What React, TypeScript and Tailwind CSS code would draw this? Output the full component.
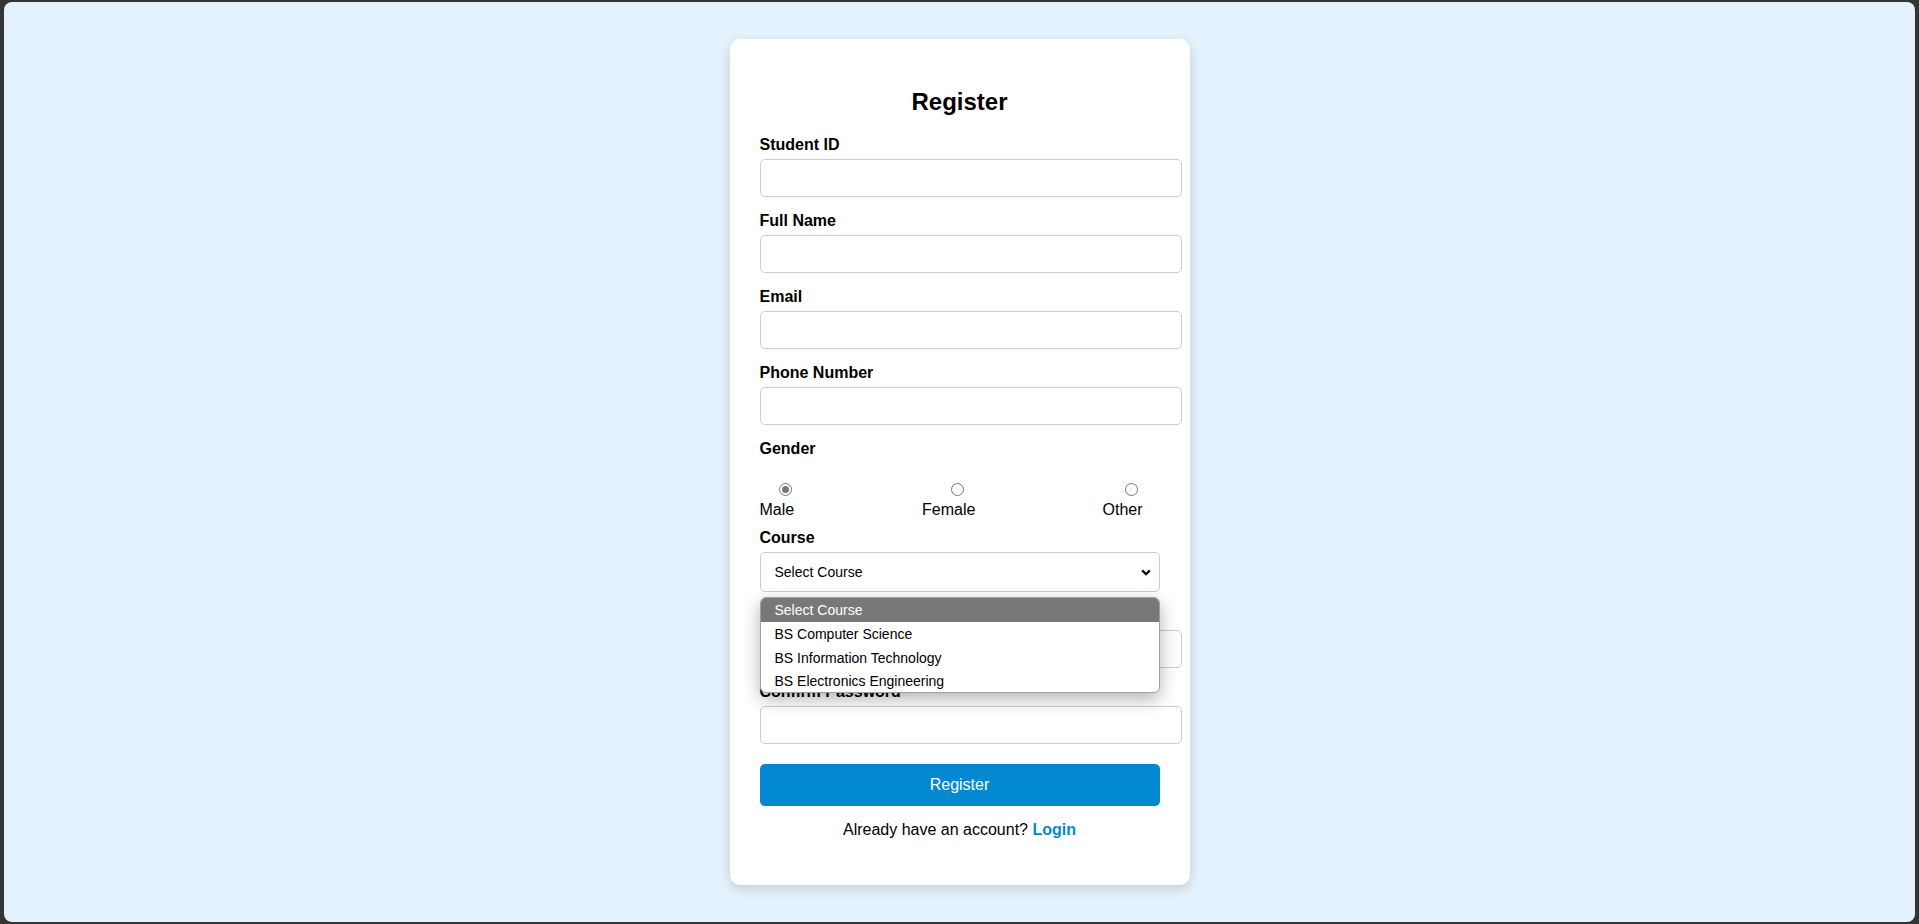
import React from "react";

const font = { fontFamily: '"Liberation Sans", Arial, sans-serif' };

function Field({ label, last }: { label: string; last?: boolean }) {
  return (
    <div className={last ? "" : "mb-[14px]"}>
      <div className="text-[16px] font-bold leading-[20px] text-black mb-[4px]">{label}</div>
      <div className="h-[38px] w-[422px] border border-[#cccccc] rounded-[5px] bg-white"></div>
    </div>
  );
}

function Radio({ label, checked, width }: { label: string; checked?: boolean; width: string }) {
  return (
    <div className={`flex flex-col ${width}`}>
      <div className="flex justify-center pt-[24px]">
        <div className="w-[13px] h-[13px] rounded-full border border-[#767676] bg-white flex items-center justify-center">
          {checked && <div className="w-[7px] h-[7px] rounded-full bg-[#767676]"></div>}
        </div>
      </div>
      <div className="mt-[4px] text-[16px] leading-[20px] text-black whitespace-nowrap">{label}</div>
    </div>
  );
}

export default function App() {
  return (
    <div className="w-full h-screen bg-[#343434] pt-[2px] pb-[2px] px-[4px]" style={font}>
      <div className="w-full h-full bg-[#e3f2fd] rounded-[8px] flex items-center justify-center">
        <div className="w-[460px] bg-white rounded-[10px] shadow-[0_4px_12px_rgba(0,0,0,0.15)] pt-[30px] pb-[30px] px-[30px]">
          <h2 className="mt-[18px] mb-[18px] text-[24px] leading-[30px] font-bold text-center text-black">Register</h2>
          <Field label="Student ID" />
          <Field label="Full Name" />
          <Field label="Email" />
          <Field label="Phone Number" />
          <div className="text-[16px] font-bold leading-[20px] text-black">Gender</div>
          <div className="flex justify-between mb-[8px]">
            <Radio label="Male" checked width="w-[52px]" />
            <Radio label="Female" width="w-[70px]" />
            <Radio label="Other" width="w-[57px]" />
          </div>
          <div className="text-[16px] font-bold leading-[20px] text-black mb-[4px]">Course</div>
          <div className="relative mb-[14px]">
            <div className="h-[40px] w-[400px] border border-[#cccccc] rounded-[5px] bg-white flex items-center justify-between pl-[14px] pr-[8px] text-[14px] text-black">
              <span>Select Course</span>
              <svg width="10" height="7" viewBox="0 0 10 7">
                <path d="M1.2 1.4 L5 5.2 L8.8 1.4" fill="none" stroke="#000" strokeWidth="2.2" />
              </svg>
            </div>
            <div className="absolute left-0 top-[45px] w-[400px] z-10 bg-white rounded-[6px] border border-[#a0a0a0] shadow-[0_6px_18px_rgba(0,0,0,0.3)] overflow-hidden text-[14px]">
              <div className="h-[24px] bg-[#787878] text-white pl-[14px] flex items-center">Select Course</div>
              <div className="h-[24px] text-black pl-[14px] flex items-center">BS Computer Science</div>
              <div className="h-[24px] text-black pl-[14px] flex items-center">BS Information Technology</div>
              <div className="h-[22px] text-black pl-[14px] flex items-center">BS Electronics Engineering</div>
            </div>
          </div>
          <Field label="Password" />
          <Field label="Confirm Password" last />
          <button className="mt-[20px] w-[400px] h-[42px] bg-[#0288d1] text-white text-[16px] rounded-[5px]">Register</button>
          <p className="mt-[15px] mb-[16px] text-center text-[16px] leading-[18px] text-black">
            Already have an account? <span className="font-bold text-[#0288d1]">Login</span>
          </p>
        </div>
      </div>
    </div>
  );
}
